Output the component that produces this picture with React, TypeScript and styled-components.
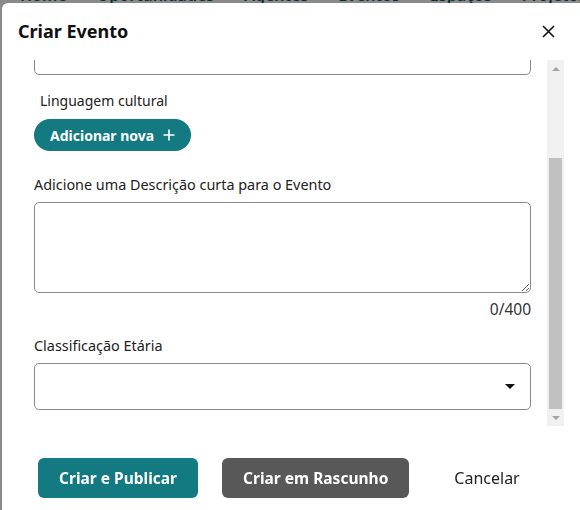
import React, { useLayoutEffect, useRef } from "react";
import styled, { createGlobalStyle } from "styled-components";

const Global = createGlobalStyle`
  html, body { margin: 0; padding: 0; background: #fff; }
  body { font-family: "Noto Sans", "Open Sans", sans-serif; color: #222; overflow: hidden; }
  * { box-sizing: border-box; }
`;

const Page = styled.div`
  width: 580px;
  height: 510px;
  overflow: hidden;
`;

const Nav = styled.nav`
  display: flex;
  gap: 30px;
  padding-left: 20px;
  margin-top: -15px;
  font-size: 16px;
  line-height: 20px;
  font-weight: 600;
  color: #0e5b60;
`;

const Overlay = styled.div`
  position: fixed;
  inset: 0;
  background: rgba(0, 0, 0, 0.46);
`;

const Modal = styled.div`
  position: fixed;
  left: 2px;
  top: 3px;
  width: 580px;
  height: 520px;
  background: #fff;
  border-radius: 6px 0 0 0;
  display: flex;
  flex-direction: column;
`;

const Header = styled.header`
  display: flex;
  align-items: center;
  justify-content: space-between;
  padding: 16px 22px 17px 16px;
`;

const Title = styled.h2`
  margin: 0;
  font-size: 18px;
  line-height: 24px;
  font-weight: 700;
  color: #111;
`;

const CloseButton = styled.button`
  width: 24px;
  height: 24px;
  border: 0;
  background: none;
  padding: 0;
  display: flex;
  align-items: center;
  justify-content: center;
  color: #111;
`;

const Body = styled.div`
  display: flex;
  margin: 0 18px 0 16px;
  height: 366px;
  flex-shrink: 0;
`;

const Viewport = styled.div`
  flex: 1;
  overflow: hidden;
  padding: 16px;
  display: flex;
  flex-direction: column;

  & > * { flex-shrink: 0; }
`;

const ScrollBar = styled.div`
  width: 17px;
  background: #f1f1f1;
  display: flex;
  flex-direction: column;
`;

const ScrollArrow = styled.div`
  height: 17px;
  display: flex;
  align-items: center;
  justify-content: center;
  color: #a3a3a3;
`;

const ScrollTrack = styled.div`
  flex: 1;
  display: flex;
  flex-direction: column;
  justify-content: flex-end;
  padding: 0 2px;
`;

const ScrollThumb = styled.div`
  height: 251px;
  background: #c1c1c1;
`;

const Intro = styled.p`
  margin: 0 0 23px;
  font-size: 14px;
  line-height: 20px;
  color: #333;
`;

const Label = styled.label<{ $indent?: boolean; $gap?: number; $size?: number }>`
  display: block;
  font-size: ${(p) => p.$size ?? 14.4}px;
  line-height: 20px;
  color: #222;
  padding-left: ${(p) => (p.$indent ? 6 : 0)}px;
  margin-bottom: ${(p) => p.$gap ?? 7}px;
`;

const TextInput = styled.input`
  display: block;
  width: 100%;
  height: 47px;
  border: 1px solid #8a8a8a;
  border-radius: 5px;
  font: inherit;
  padding: 0 12px;
  margin-bottom: 16px;
`;

const PillButton = styled.button`
  align-self: flex-start;
  display: inline-flex;
  align-items: center;
  gap: 9px;
  height: 32px;
  padding: 0 16px 0 16px;
  border: 0;
  border-radius: 16px;
  background: #127a80;
  color: #fff;
  font-family: inherit;
  font-size: 14px;
  font-weight: 700;
  margin-bottom: 24px;
`;

const TextArea = styled.textarea`
  display: block;
  width: 100%;
  height: 91px;
  border: 1px solid #8a8a8a;
  border-radius: 5px;
  font: inherit;
  padding: 8px 12px;
  margin: 0 0 7px;
`;

const Counter = styled.div`
  text-align: right;
  font-size: 15.5px;
  line-height: 18px;
  color: #333;
  margin-bottom: 18px;
`;

const SelectBox = styled.div`
  display: flex;
  align-items: center;
  justify-content: flex-end;
  height: 47px;
  border: 1px solid #8a8a8a;
  border-radius: 5px;
  padding-right: 15px;
`;

const Footer = styled.footer`
  display: flex;
  align-items: center;
  gap: 24px;
  padding: 32px 0 0 36px;
`;

const ActionButton = styled.button<{ $variant: "primary" | "secondary" | "text" }>`
  height: 40px;
  padding: 0 21px;
  border: 0;
  border-radius: 6px;
  font-family: inherit;
  font-size: ${(p) => (p.$variant === "text" ? 16 : 15.5)}px;
  font-weight: ${(p) => (p.$variant === "text" ? 400 : 700)};
  color: ${(p) => (p.$variant === "text" ? "#222" : "#fff")};
  background: ${(p) =>
    p.$variant === "primary" ? "#127a80" : p.$variant === "secondary" ? "#585858" : "transparent"};
`;

export default function App() {
  const viewRef = useRef<HTMLDivElement>(null);
  useLayoutEffect(() => {
    if (viewRef.current) viewRef.current.scrollTop = viewRef.current.scrollHeight;
  }, []);

  return (
    <Page>
      <Global />
      <Nav>
        <span>Home</span>
        <span>Oportunidades</span>
        <span>Agentes</span>
        <span>Eventos</span>
        <span>Espaços</span>
        <span>Projetos</span>
      </Nav>
      <Overlay />
      <Modal>
        <Header>
          <Title>Criar Evento</Title>
          <CloseButton aria-label="Fechar">
            <svg width="13" height="13" viewBox="0 0 13 13">
              <path d="M1 1L12 12M12 1L1 12" stroke="currentColor" strokeWidth="1.6" />
            </svg>
          </CloseButton>
        </Header>
        <Body>
          <Viewport ref={viewRef}>
            <Intro>Crie um evento com informações básicas e de forma rápida.</Intro>
            <Label>Nome do evento</Label>
            <TextInput />
            <Label $indent $gap={8} $size={14}>Linguagem cultural</Label>
            <PillButton>
              Adicionar nova
              <svg width="12" height="12" viewBox="0 0 12 12">
                <path d="M6 0.5V11.5M0.5 6H11.5" stroke="currentColor" strokeWidth="1.6" />
              </svg>
            </PillButton>
            <Label>Adicione uma Descrição curta para o Evento</Label>
            <TextArea />
            <Counter>0/400</Counter>
            <Label>Classificação Etária</Label>
            <SelectBox>
              <svg width="10" height="5" viewBox="0 0 10 5">
                <path d="M0 0H10L5 5Z" fill="#111" />
              </svg>
            </SelectBox>
          </Viewport>
          <ScrollBar>
            <ScrollArrow>
              <svg width="8" height="4" viewBox="0 0 8 4">
                <path d="M0 4H8L4 0Z" fill="currentColor" />
              </svg>
            </ScrollArrow>
            <ScrollTrack>
              <ScrollThumb />
            </ScrollTrack>
            <ScrollArrow>
              <svg width="8" height="4" viewBox="0 0 8 4">
                <path d="M0 0H8L4 4Z" fill="currentColor" />
              </svg>
            </ScrollArrow>
          </ScrollBar>
        </Body>
        <Footer>
          <ActionButton $variant="primary">Criar e Publicar</ActionButton>
          <ActionButton $variant="secondary">Criar em Rascunho</ActionButton>
          <ActionButton $variant="text">Cancelar</ActionButton>
        </Footer>
      </Modal>
    </Page>
  );
}
